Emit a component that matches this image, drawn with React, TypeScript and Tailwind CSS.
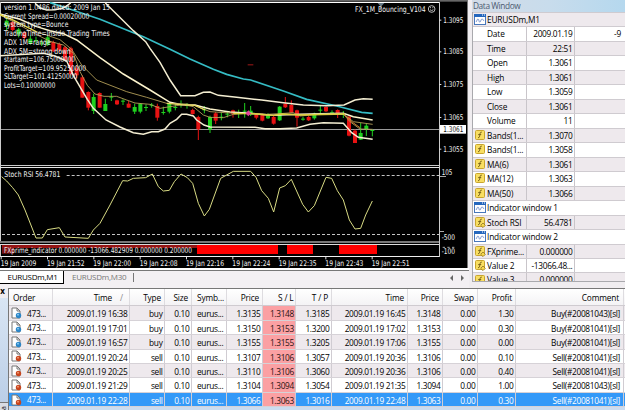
import React from "react";

const CHART_FONT = "'DejaVu Sans Condensed', 'DejaVu Sans', sans-serif";

// [x, body top, body bottom, wick top, wick bottom, up?]
type Candle = [number, number, number, number, number, boolean];

const candles: Candle[] = [
  [20, 62, 78, 50, 90, true],
  [38, 66, 90, 62, 94, false],
  [56, 88, 103, 84, 112, true],
  [73, 98, 114, 94, 118, false],
  [91, 116, 130, 106, 134, true],
  [108, 120, 123, 110, 132, true],
  [125, 128, 131, 118, 138, true],
  [143, 112, 134, 106, 138, true],
  [160, 126, 154, 122, 156, false],
  [178, 132, 150, 128, 156, false],
  [195, 142, 180, 138, 184, false],
  [213, 145, 222, 140, 226, false],
  [230, 205, 226, 195, 236, false],
  [247, 232, 293, 226, 293, false],
  [265, 276, 323, 274, 331, false],
  [281, 291, 333, 281, 342, true],
  [299, 279, 323, 277, 323, false],
  [316, 312, 333, 296, 333, true],
  [334, 290, 293, 279, 303, true],
  [351, 301, 313, 299, 315, false],
  [369, 302, 305, 298, 315, true],
  [386, 311, 323, 303, 323, false],
  [404, 321, 335, 311, 342, true],
  [421, 311, 335, 309, 340, true],
  [438, 321, 324, 313, 333, true],
  [455, 314, 317, 309, 323, true],
  [472, 318, 353, 311, 362, false],
  [490, 336, 339, 320, 344, true],
  [508, 311, 335, 307, 340, true],
  [526, 321, 324, 313, 331, true],
  [543, 311, 314, 301, 323, true],
  [561, 315, 318, 309, 326, true],
  [578, 330, 342, 326, 344, false],
  [595, 351, 388, 347, 420, false],
  [613, 328, 331, 318, 340, true],
  [630, 351, 388, 347, 399, true],
  [647, 340, 362, 336, 372, false],
  [664, 350, 353, 338, 361, true],
  [682, 341, 344, 335, 352, true],
  [699, 331, 341, 329, 353, false],
  [716, 337, 340, 329, 354, true],
  [734, 332, 335, 309, 353, true],
  [752, 332, 344, 318, 348, true],
  [769, 343, 353, 339, 358, false],
  [787, 345, 362, 341, 364, false],
  [804, 342, 355, 340, 357, true],
  [821, 351, 371, 347, 374, false],
  [839, 320, 361, 318, 363, true],
  [856, 311, 322, 291, 324, false],
  [874, 315, 338, 301, 338, false],
  [891, 331, 353, 329, 380, false],
  [909, 356, 359, 350, 362, true],
  [926, 351, 361, 347, 363, false],
  [943, 341, 355, 338, 359, true],
  [961, 329, 332, 315, 345, true],
  [978, 321, 334, 319, 336, false],
  [996, 337, 340, 331, 342, true],
  [1013, 330, 342, 328, 354, false],
  [1030, 341, 344, 333, 354, true],
  [1047, 350, 407, 346, 409, false],
  [1065, 392, 429, 388, 429, false],
  [1082, 399, 419, 369, 420, true],
  [1099, 377, 387, 371, 408, true],
  [1117, 390, 393, 388, 409, true],
];

const upperBands = [
  "105,10 122,24 140,30 165,29 190,24 212,9",
  "316,9 400,92 437,125 450,145 480,187 510,240 542,287 585,287 610,277 630,276 655,286 710,292 785,300 850,308 910,315 980,317 1032,315 1065,300 1090,296 1118,298",
];
const middleBand =
  "0,42 60,58 110,80 150,92 190,101 230,120 300,173 370,222 450,270 510,307 545,314 585,315 630,327 690,336 750,340 820,346 900,343 1030,340 1060,350 1118,360";
const lowerBand =
  "0,167 130,160 165,168 200,183 222,230 262,298 280,325 318,360 360,381 400,398 430,403 455,395 475,395 495,387 510,370 530,358 545,343 560,343 580,348 590,360 612,375 630,381 765,382 795,386 840,386 890,384 930,373 970,368 1030,370 1055,398 1075,412 1118,418";
const averages = [
  "0,45 50,70 110,104 150,124 190,135 220,160 240,215 262,256 285,282 312,289 350,289 380,300 405,309 450,313 480,325 510,320 550,314 580,320 610,345 630,352 670,353 700,343 740,340 800,343 840,341 880,338 900,348 950,343 1030,342 1050,365 1080,387 1118,388",
  "0,43 110,95 180,119 215,148 245,195 290,240 380,275 440,292 500,310 560,312 585,317 630,335 690,339 740,341 820,347 840,341 900,345 970,343 1030,342 1060,365 1118,373",
];
const slowAverage =
  "150,8 200,24 300,58 430,110 510,148 570,177 640,208 680,223 730,237 752,240 850,273 920,298 1010,318 1085,337 1118,340";
const stochRsi =
  "5,530 20,543 38,563 55,585 75,630 108,714 127,714 142,689 178,683 195,711 265,715 280,690 300,670 330,615 368,542 383,543 400,535 437,533 457,522 475,560 490,573 508,571 523,545 543,522 562,533 578,550 595,610 613,648 628,628 662,535 700,514 752,514 768,532 785,572 805,595 821,636 839,564 856,557 874,538 908,613 925,636 943,617 978,532 995,535 1012,572 1030,600 1048,660 1065,687 1082,685 1097,645 1117,603";

const info: [string, number, number][] = [
  ["version 1.0486 dated: 2009 Jan 15", 22, 318],
  ["Current Spread=0.00020000", 48, 256],
  ["system type=Bounce", 74, 193],
  ["TradingTime=Inside Trading Times", 101, 317],
  ["ADX 1M=range", 126, 140],
  ["ADX 5M=strong down", 153, 200],
  ["startamt=106.75000000", 178, 213],
  ["ProfitTarget=109.95250000", 205, 246],
  ["SLTarget=101.41250000", 230, 220],
  ["Lots=0.10000000", 257, 154],
];

const prices: [string, number][] = [
  ["1.3095", 60],
  ["1.3085", 155],
  ["1.3075", 253],
  ["1.3065", 352],
  ["1.3055", 447],
];

const times: [string, number, number][] = [
  ["19 Jan 2009", 2, 107],
  ["19 Jan 21:52", 141, 113],
  ["19 Jan 22:00", 280, 113],
  ["19 Jan 22:08", 419, 114],
  ["19 Jan 22:16", 558, 114],
  ["19 Jan 22:24", 697, 114],
  ["19 Jan 22:35", 836, 114],
  ["19 Jan 22:43", 976, 114],
  ["19 Jan 22:51", 1115, 114],
];

type LabelProps = {
  x: number;
  y: number;
  width: number;
  text: string;
  fill?: string;
};

function Label({ x, y, width, text, fill = "#f4f4f4" }: LabelProps) {
  return (
    <text
      x={x}
      y={y + 8}
      fill={fill}
      fontSize={23.5}
      fontFamily={CHART_FONT}
      textLength={width}
      lengthAdjust="spacingAndGlyphs"
    >
      {text}
    </text>
  );
}

function Chart() {
  return (
    <svg
      viewBox="0 0 1404 804"
      className="block h-[268px] w-[468px] shrink-0 bg-black"
    >
      <rect x={0} y={0} width={1404} height={5} fill="#666" />
      <rect x={0} y={6} width={1317} height={3} fill="#fff" />
      <rect x={0} y={6} width={3} height={765} fill="#ccc" />
      <rect x={1401} y={0} width={3} height={804} fill="#777" />

      <rect x={3} y={387} width={1314} height={3} fill="#9a9a9a" />
      {candles.map(([x, top, bottom, high, low, up]) => (
        <g key={x} fill={up ? "#1fd01f" : "#e81212"}>
          <rect x={x - 1.5} y={high} width={3} height={low - high} />
          <rect x={x - 6} y={top} width={12} height={bottom - top} />
        </g>
      ))}
      <g fill="none">
        <polyline points={slowAverage} stroke="#35bcc4" strokeWidth={5} />
        {upperBands.map((points) => (
          <polyline
            key={points}
            points={points}
            stroke="#f4eed2"
            strokeWidth={4.5}
          />
        ))}
        <polyline points={middleBand} stroke="#fbf3cc" strokeWidth={4.5} />
        <polyline points={lowerBand} stroke="#f4eed2" strokeWidth={4.5} />
        {averages.map((points) => (
          <polyline
            key={points}
            points={points}
            stroke="#b8a45c"
            strokeWidth={2.6}
          />
        ))}
        <polyline
          points="0,44 40,60 75,78 110,96"
          stroke="#e6da45"
          strokeWidth={4}
        />
        <polyline
          points="500,310 545,314 585,316 615,330"
          stroke="#e6da60"
          strokeWidth={4}
        />
        <polyline
          points="700,341 760,341 820,346 845,342 900,345 1035,342"
          stroke="#dcd040"
          strokeWidth={4}
        />
        <polyline
          points="1032,344 1055,365 1080,383"
          stroke="#c87a2c"
          strokeWidth={3}
        />
      </g>
      <path d="M745 331l8 9-8 9-8-9z" fill="#e0409a" />
      <rect x={743} y={193} width={17} height={3} fill="#a01818" />
      <path d="M1133 9h20l-8 9v8h-4v-8z" fill="#667885" />

      {info.map(([text, y, width]) => (
        <Label key={text} x={12} y={y} width={width} text={text} />
      ))}
      <Label x={1065} y={28} width={212} text="FX_1M_Bouncing_V104" />
      <g stroke="#ddd" strokeWidth={2.5} fill="none">
        <circle cx={1295} cy={27} r={10} />
        <path d="M1290 29q5 6 10 0M1290 23h3M1297 23h3" />
      </g>

      <rect x={0} y={495} width={1320} height={3} fill="#ccc" />
      <rect x={0} y={501} width={1320} height={3} fill="#e5e5e5" />
      <rect x={0} y={723} width={1320} height={6} fill="#777" />
      <rect x={0} y={729} width={1320} height={3} fill="#000" />
      <rect x={0} y={732} width={1320} height={3} fill="#ddd" />
      <rect x={0} y={768} width={1320} height={3} fill="#eee" />
      <rect x={1317} y={6} width={3} height={765} fill="#ccc" />

      <path
        d="M200 526.5H1317M6 703.5H1317"
        stroke="#c4c4c4"
        strokeWidth={3}
        strokeDasharray="9 6"
      />
      <polyline
        points={stochRsi}
        fill="none"
        stroke="#d8db84"
        strokeWidth={3}
      />
      <Label x={13} y={524} width={168} text="Stoch RSI 56.4781" />

      <rect x={6} y={735} width={585} height={9} fill="#951414" />
      <rect x={6} y={744} width={36} height={17} fill="#7a1010" />
      <rect x={591} y={735} width={243} height={27} fill="#f00" />
      <rect x={861} y={735} width={78} height={27} fill="#f00" />
      <rect x={1017} y={735} width={114} height={27} fill="#f00" />
      <Label
        x={12}
        y={752}
        width={564}
        text="FXprime_indicator 0.000000 -13066.482909 0.000000 0.200000"
      />

      {prices.map(([text, y]) => (
        <g key={text}>
          <rect x={1317} y={y - 1} width={7} height={3} fill="#ddd" />
          <Label x={1330} y={y} width={60} text={text} />
        </g>
      ))}
      <rect x={1320} y={375} width={78} height={26} fill="#fff" />
      <Label x={1330} y={388} width={60} text="1.3061" fill="#111" />
      <rect x={1320} y={528} width={18} height={3} fill="#aaa" />
      <rect x={1320} y={693} width={12} height={3} fill="#aaa" />
      <Label x={1325} y={518} width={32} text="105" />
      <Label x={1325} y={712} width={40} text="-500" />
      <path
        d="M1328 742h36"
        stroke="#aaa"
        strokeWidth={3}
        strokeDasharray="7 7"
      />
      <Label x={1325} y={755} width={40} text="-100" />

      {times.map(([text, x, width]) => (
        <g key={text}>
          <rect x={x} y={771} width={3} height={7} fill="#ddd" />
          <Label x={x} y={790} width={width} text={text} />
        </g>
      ))}
    </svg>
  );
}

function ChartTabs() {
  return (
    <div className="flex h-[20px] flex-col border-t-2 border-white bg-[#f3f0f3]">
      <div className="flex h-[14px] w-[469px] items-stretch border-t border-[#777] font-['Open_Sans',sans-serif] text-[8px] tracking-[-0.25px] whitespace-nowrap">
        <div className="w-[64px] border-r border-b border-black bg-white pl-[7.5px] leading-[11px] text-black">
          EURUSDm,M1
        </div>
        <div className="w-[69px] pl-[8px] leading-[11px] text-[#777]">
          EURUSDm,M30
        </div>
        <div className="mt-[2px] h-[9px] w-px bg-[#777]" />
        <svg viewBox="0 0 20 8" className="mt-[3px] ml-auto h-[8px] w-[20px]">
          <path d="M4 1v6l-3-3zM12 1v6l3-3z" fill="#666" />
        </svg>
      </div>
    </div>
  );
}

function WindowIcon() {
  return (
    <svg viewBox="0 0 12 11" className="h-[11px] w-[12px]">
      <rect x=".5" y=".5" width="11" height="10" fill="#fff" stroke="#4777ba" />
      <path d="M0 0h12v3H0z" fill="#2467bd" />
      <path d="M8 1h1M10 1h1" stroke="#fff" />
      <path
        d="M2 8c1-1 1-3 2-3s1 4 2 3 1-3 2-3 1 1 2 2"
        fill="none"
        stroke="#7795d0"
      />
    </svg>
  );
}

function FunctionIcon({ custom }: { custom?: boolean }) {
  return (
    <svg viewBox="0 0 12 11" className="h-[11px] w-[12px]">
      <rect
        x="1.5"
        y=".5"
        width="9"
        height="9"
        rx="1"
        fill="#f8de62"
        stroke="#c9a52e"
      />
      <path
        d="M7.8 2.2c-1.5-.4-1.6.6-1.9 2.3S5.6 8 4 7.7M4.2 4.6h3"
        fill="none"
        stroke="#77601a"
      />
      {custom && (
        <path
          d="M9 6l2.3 2.3L9 10.6 6.7 8.3z"
          fill="#f7d94e"
          stroke="#8f7423"
          strokeWidth=".8"
        />
      )}
    </svg>
  );
}

type DataRow = {
  icon?: "window" | "fn" | "custom";
  name: string;
  value?: string;
  extra?: string;
};

const dataRows: DataRow[] = [
  { icon: "window", name: "EURUSDm,M1" },
  { name: "Date", value: "2009.01.19", extra: "-9" },
  { name: "Time", value: "22:51" },
  { name: "Open", value: "1.3061" },
  { name: "High", value: "1.3061" },
  { name: "Low", value: "1.3059" },
  { name: "Close", value: "1.3061" },
  { name: "Volume", value: "11" },
  { icon: "fn", name: "Bands(1...", value: "1.3070" },
  { icon: "fn", name: "Bands(1...", value: "1.3058" },
  { icon: "fn", name: "MA(6)", value: "1.3061" },
  { icon: "fn", name: "MA(12)", value: "1.3063" },
  { icon: "fn", name: "MA(50)", value: "1.3066" },
  { icon: "window", name: "Indicator window 1" },
  { icon: "custom", name: "Stoch RSI", value: "56.4781" },
  { icon: "window", name: "Indicator window 2" },
  { icon: "custom", name: "FXprime...", value: "0.000000" },
  { icon: "custom", name: "Value 2", value: "-13066.48..." },
  { icon: "custom", name: "Value 3", value: "0.000000" },
];

function DataWindow() {
  return (
    <div className="flex h-[288px] min-w-0 flex-1 flex-col bg-[#f0edf0] pl-[3px] font-['Open_Sans',sans-serif] text-[8.3px] tracking-[-0.15px] text-black">
      <div className="h-[12px] bg-gradient-to-r from-[#d3dce7] via-[#c8dcec] to-[#b5d8ee] pl-[1px] leading-[11px] tracking-[-0.4px] text-[#4c5a70]">
        Data Window
      </div>
      <div className="h-[270px] overflow-hidden border-b border-l border-[#a9a9ad]">
        {dataRows.map((row, i) => (
          <div
            key={i}
            className={`flex h-[14.48px] border-t border-[#cfcbd0] leading-[13px] whitespace-nowrap ${i % 2 === 0 ? "bg-[#eee9ed]" : "bg-white"}`}
          >
            <div className="flex w-[14px] shrink-0 items-center pl-[1px]">
              {row.icon === "window" && <WindowIcon />}
              {row.icon === "fn" && <FunctionIcon />}
              {row.icon === "custom" && <FunctionIcon custom />}
            </div>
            {row.value ? (
              <>
                <div className="w-[40px] shrink-0 border-r border-[#c9c5ca]">
                  {row.name}
                </div>
                <div className="w-[48px] shrink-0 border-r border-[#c9c5ca] pr-[1.5px] text-right tracking-[-0.3px]">
                  {row.value}
                </div>
                <div className="flex-1 pr-[4px] text-right">{row.extra}</div>
              </>
            ) : (
              <div>{row.name}</div>
            )}
          </div>
        ))}
      </div>
    </div>
  );
}

function OrderIcon({ buy }: { buy: boolean }) {
  return (
    <svg viewBox="0 0 11 12" className="h-[12px] w-[11px] shrink-0">
      <path d="M1 1h5l3 3v7H1z" fill="#fff" stroke="#777" />
      <path d="M6 1v3h3" fill="none" stroke="#777" />
      <circle cx="7.5" cy="8.5" r="2.7" fill={buy ? "#2c86c8" : "#c8451d"} />
      <circle cx="7" cy="7.7" r=".9" fill={buy ? "#8fd0f5" : "#f3a27a"} />
    </svg>
  );
}

const columns = [
  { title: "Order", width: "w-[44px]", head: "pl-[4px]" },
  { title: "Time", width: "w-[77px]", head: "pr-[6px] text-right" },
  { title: "Type", width: "w-[35px]", head: "pr-[3px] text-right" },
  { title: "Size", width: "w-[27px]", head: "pr-[3px] text-right" },
  { title: "Symb...", width: "w-[35px]", head: "pl-[5px]" },
  { title: "Price", width: "w-[36px]", head: "pr-[3px] text-right" },
  { title: "S / L", width: "w-[33px]", head: "pr-[1.5px] text-right" },
  { title: "T / P", width: "w-[36px]", head: "pr-[3px] text-right" },
  { title: "Time", width: "w-[76px]", head: "pr-[3px] text-right" },
  { title: "Price", width: "w-[35px]", head: "pr-[3px] text-right" },
  { title: "Swap", width: "w-[35px]", head: "pr-[3px] text-right" },
  { title: "Profit", width: "w-[38px]", head: "pr-[3px] text-right" },
  { title: "Comment", width: "w-[108px]", head: "pr-[4px] text-right" },
];

const orders = [
  ["473...", "2009.01.19 16:38", "buy", "0.10", "eurus...", "1.3135", "1.3148", "1.3185", "2009.01.19 16:45", "1.3148", "0.00", "1.30", "Buy(#20081043)[sl]"],
  ["473...", "2009.01.19 17:01", "buy", "0.10", "eurus...", "1.3150", "1.3153", "1.3200", "2009.01.19 17:02", "1.3153", "0.00", "0.30", "Buy(#20081041)[sl]"],
  ["473...", "2009.01.19 16:57", "buy", "0.10", "eurus...", "1.3155", "1.3155", "1.3205", "2009.01.19 17:06", "1.3155", "0.00", "0.00", "Buy(#20081041)[sl]"],
  ["473...", "2009.01.19 20:24", "sell", "0.10", "eurus...", "1.3107", "1.3106", "1.3057", "2009.01.19 20:36", "1.3106", "0.00", "0.10", "Sell(#20081041)[sl]"],
  ["473...", "2009.01.19 20:25", "sell", "0.10", "eurus...", "1.3110", "1.3106", "1.3060", "2009.01.19 20:36", "1.3106", "0.00", "0.40", "Sell(#20081041)[sl]"],
  ["473...", "2009.01.19 21:29", "sell", "0.10", "eurus...", "1.3104", "1.3094", "1.3054", "2009.01.19 21:35", "1.3094", "0.00", "1.00", "Sell(#20081043)[sl]"],
  ["473...", "2009.01.19 22:28", "sell", "0.10", "eurus...", "1.3066", "1.3063", "1.3016", "2009.01.19 22:48", "1.3063", "0.00", "0.30", "Sell(#20081041)[sl]"],
];

function rowStyle(i: number) {
  if (i === orders.length - 1) return "bg-[#3399f8] text-white";
  return i % 2 === 0 ? "bg-[#eee9ed]" : "bg-white";
}

function cellStyle(j: number) {
  if (j === 0) return "flex items-center gap-[5px] pl-[2px]";
  if (j === 4) return "pl-[5px]";
  if (j === 6) return "bg-[#fba0a3] pr-[1px] text-right text-[#2a1212]";
  if (j === 12) return "pr-[3px] text-right";
  return "pr-[1.5px] text-right";
}

function Terminal() {
  return (
    <div className="flex h-[122px] font-['Open_Sans',sans-serif] text-[8.3px] tracking-[-0.3px] whitespace-nowrap text-black">
      <div className="flex w-[8px] shrink-0 flex-col justify-between bg-gradient-to-b from-[#dce8f5] to-[#b9cde6]">
        <div className="h-[10px] bg-[#f0edf0] pr-[3px] text-center text-[8px] leading-[6px] font-bold">
          x
        </div>
        <div className="h-[8px] border-t border-[#777] bg-[#d8dce4] text-[7px] leading-[6px]">
          <span className="block -rotate-90">a</span>
        </div>
      </div>
      <div className="flex-1 border-t border-l border-[#777] bg-white">
        <div className="flex h-[17.3px] border-b border-[#cfcbd0] bg-gradient-to-b from-white to-[#f4f3f5] leading-[18px] tracking-[-0.15px]">
          {columns.map((col, i) => (
            <div
              key={i}
              className={`${col.width} shrink-0 border-r border-[#dedce0] ${col.head}`}
            >
              {col.title}
              {i === 1 && <span className="pl-[8px] text-[#888]">/</span>}
            </div>
          ))}
        </div>
        {orders.map((order, i) => (
          <div
            key={i}
            className={`flex h-[14.45px] border-b border-[#d6d2d7] leading-[15px] ${rowStyle(i)}`}
          >
            {order.map((cell, j) => (
              <div
                key={j}
                className={`${columns[j].width} shrink-0 border-r border-[#d0ccd2] ${cellStyle(j)}`}
              >
                {j === 0 && <OrderIcon buy={order[2] === "buy"} />}
                {cell}
              </div>
            ))}
          </div>
        ))}
        <div className="h-[3px] bg-[#cbdcf0]" />
      </div>
    </div>
  );
}

function App() {
  return (
    <div className="h-[410px] w-[625px] overflow-hidden bg-[#f0edf0]">
      <div className="flex h-[288px]">
        <div className="w-[469px] shrink-0">
          <Chart />
          <ChartTabs />
        </div>
        <DataWindow />
      </div>
      <Terminal />
    </div>
  );
}

export default App;
